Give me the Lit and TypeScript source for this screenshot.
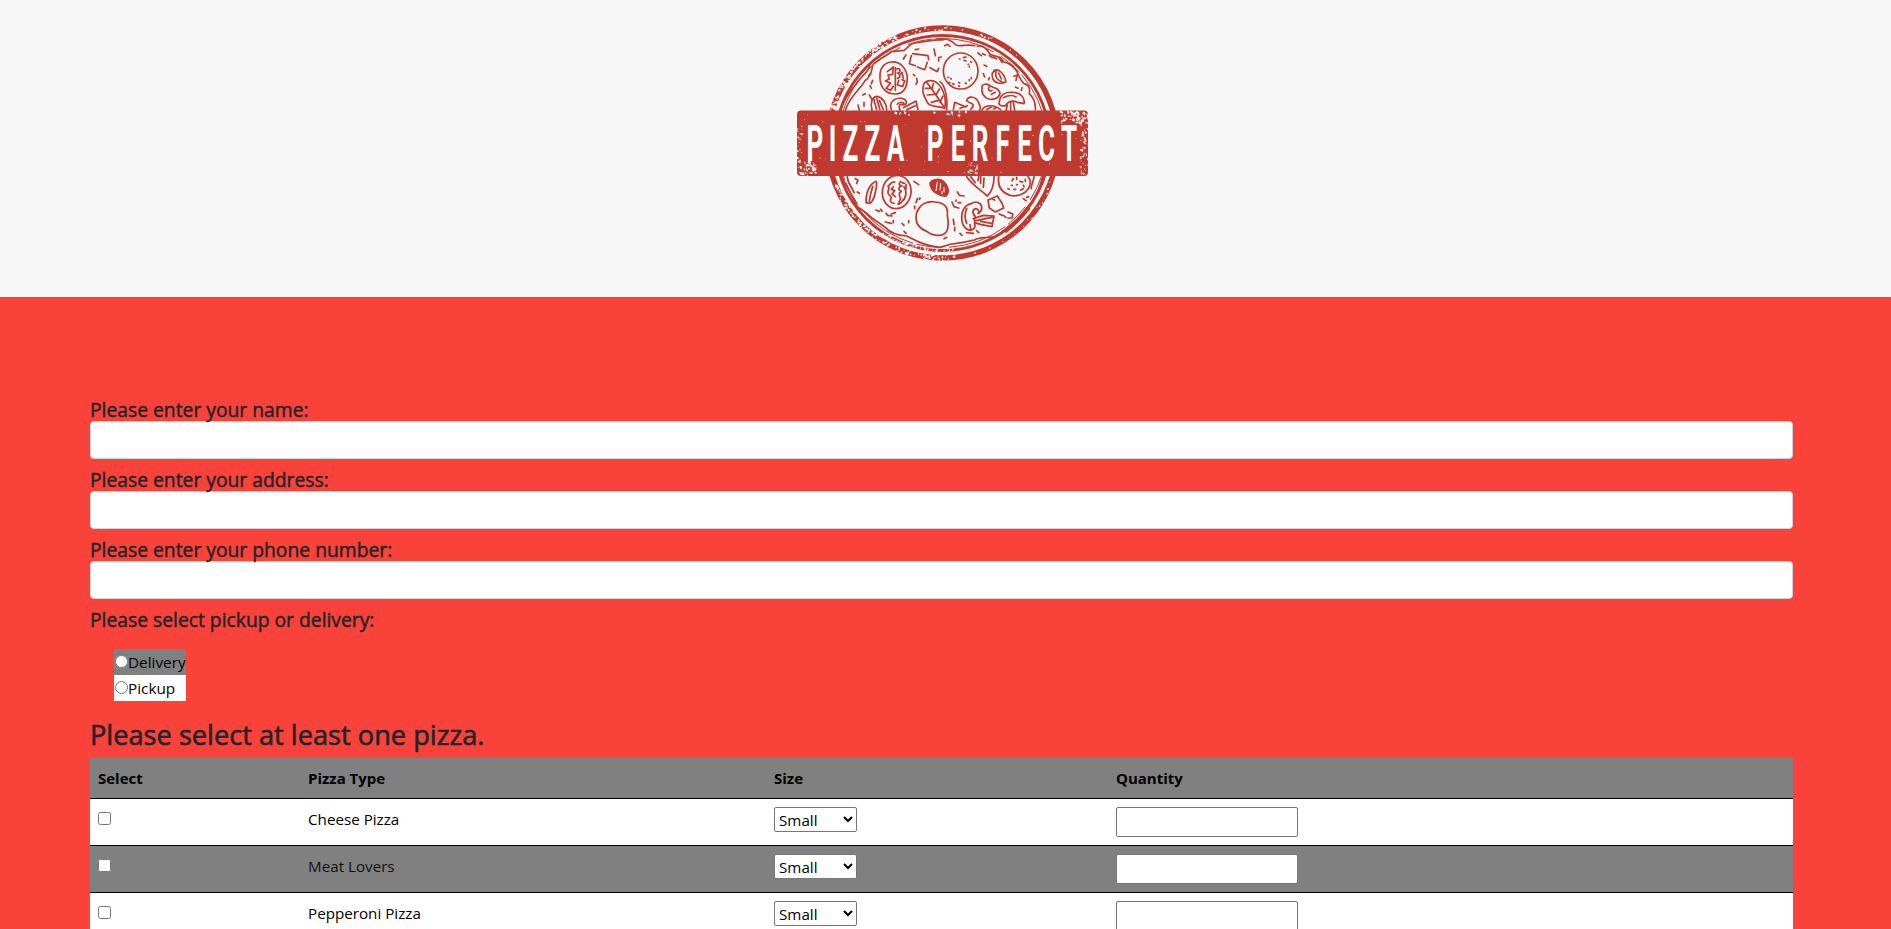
import { LitElement, html, svg, css } from "lit";
import { customElement } from "lit/decorators.js";

const LETTERS = [815, 832.7, 850.5, 872.5, 895.5, 915, 935, 958, 980, 1002.5, 1024.5, 1046.5, 1069];
const STRETCH = 0.52;

/** Deterministic generator so the worn texture is the same on each paint. */
function random(seed: number) {
  let s = seed;
  return () => (s = (s * 16807) % 2147483647) / 2147483647;
}

function specks(seed: number, n: number, x: number, y: number, w: number, h: number, max: number) {
  const r = random(seed);
  let d = "";
  for (let i = 0; i < n; i++) {
    const px = x + r() * w, py = y + r() * h, a = 0.4 + r() * max, b = 0.4 + r() * max;
    d += `M${px.toFixed(1)} ${py.toFixed(1)}l${a.toFixed(1)} ${(b / 2).toFixed(1)}l${(-a / 3).toFixed(1)} ${b.toFixed(1)}l${(-a).toFixed(1)} ${(-b / 2).toFixed(1)}z`;
  }
  return d;
}

function rimSpecks(seed: number, n: number, from: number, to: number, rad: number, spread: number, max: number) {
  const r = random(seed);
  let d = "";
  for (let i = 0; i < n; i++) {
    const t = ((from + r() * (to - from)) * Math.PI) / 180;
    const q = rad + (r() - 0.5) * spread;
    const px = 942.5 + q * Math.cos(t), py = 143 + q * Math.sin(t);
    const a = 0.6 + r() * max, b = 0.5 + r() * max;
    d += `M${px.toFixed(1)} ${py.toFixed(1)}l${a.toFixed(1)} ${(-b / 2).toFixed(1)}l${(a / 4).toFixed(1)} ${b.toFixed(1)}l${(-a).toFixed(1)} ${(b / 3).toFixed(1)}z`;
  }
  return d;
}

@customElement("pizza-logo")
export class PizzaLogo extends LitElement {
  static styles = css`
    :host { display: block; width: 310px; height: 255px; }
    .art { display: block; width: 310px; height: 255px; }
    .line { fill: none; stroke: #c0392e; stroke-linecap: round; stroke-linejoin: round; }
    .ink { fill: #c0392e; }
    .paper { fill: #f7f7f7; }
    .name { font-family: Roboto, "Liberation Sans", sans-serif; font-size: 50px; font-weight: 700; fill: #fff; text-anchor: middle; }
  `;

  private topLeft() {
    return svg`<g class="line" transform="translate(790 15) scale(.33333)" stroke-width="5">
      <path d="M152 284C160 258 178 232 198 208C206 190 232 176 240 152M166 286C180 240 216 218 224 198C240 188 246 168 248 150M252 146C270 130 294 120 304 110L342 106C356 96 360 86 374 84C400 82 416 74 462 74" />
      <path d="M270 192C268 162 278 144 304 141C332 138 350 162 352 188C352 220 338 237 318 237C292 238 272 222 270 192" />
      <path d="M292 170l18-14-2 22-14 2 4 12-12 6 16 6-14 16 14 6 8-12M316 158v68M320 162c12-6 14 12 2 12 12 2 8 16 0 16M326 196l-4 14 16 4 6-16-8-4M328 180l8-8 4 18" />
      <path d="M368 116L414 122L416 134M412 142L404 164L382 156M376 152L358 146L364 122" />
      <path d="M432 102l4 20M446 128v10M420 158l22 12 4-10M386 102l-10 2M348 120l-8 12M380 190l2 10-4 8M236 182l6-6M248 196l-4 10M240 212l4 8M226 236l-8 4M238 240l8 14M204 270l4 16M222 262l0 12M370 178l4 4" />
      <path d="M400 212C402 196 424 192 442 204C462 222 470 256 464 280C444 272 420 278 412 262C400 240 396 230 400 212M408 200C424 218 442 246 462 276M426 222l4-16M438 240l10-18M424 220l-18 0M434 238l-22 2M446 256l-22 6M450 262l8-18" />
      <path d="M246 286C240 264 246 246 260 244C278 246 290 266 290 286M252 254l8 30M260 250l10 34M268 256l12 28" />
      <path d="M304 284C296 262 312 248 334 250C352 252 354 270 340 270C330 264 324 272 330 286M340 278L378 258L384 284M350 284l26-12M322 268c6-8 18-8 20-2" />
    </g>`;
  }

  private topRight() {
    return svg`<g class="line" transform="translate(940 15) scale(.33333)" stroke-width="5">
      <path d="M0 74C18 68 34 76 48 90C62 96 82 86 104 92M112 94C128 88 142 104 150 118C166 126 182 120 190 140C206 144 222 152 232 172C238 184 240 196 252 206C268 208 270 224 268 236C280 248 288 260 286 284" />
      <ellipse cx="62" cy="168" rx="52" ry="54" />
      <path d="M58 132h2M72 136l6 2M84 148h2M88 154v2M70 128l8-2M92 140l2 2M24 186v2M32 190l2 2M26 202l4 2M38 206l4 2M56 202l3 2M76 204l3 2M94 188v3M88 194v3M56 212l2 2" />
      <path d="M162 166C176 160 192 174 198 200C184 208 164 206 158 190C154 178 156 168 168 168M168 172c-4 14 6 24 18 28M176 174l8 18" />
      <path d="M126 218C124 206 142 204 152 214C164 220 178 220 180 236C176 250 160 256 146 252C130 246 124 232 126 218M148 214c-6 10 0 18 8 12M154 238l12-6" />
      <path d="M178 260C180 240 196 230 218 232C242 232 256 250 252 266L232 262C220 256 206 258 196 272C182 274 174 270 178 260M202 270l-4 18M212 262v24M220 262l4 24M190 248c12-6 26-10 38-2" />
      <path d="M126 286C132 270 160 266 182 284M140 284l14-8M160 282l8-4M44 262L40 284M44 262L78 276M60 280l22-8M80 258C84 240 110 244 116 264C122 274 122 284 118 286M82 258C86 266 100 262 100 272L92 284M0 200C16 210 24 256 20 284" />
      <path d="M14 92l8-4 8 6M114 114l10 8M128 116l8 4M132 150l8 4M130 176l4 10M148 188l-2 6M222 184l10-4-4 16M226 216l8 4M246 218l-2 8M148 122l10 6M160 126l10 6M178 130l8 12M208 146l10 6M0 126h4" />
    </g>`;
  }

  private bottom() {
    return svg`<g class="line" transform="translate(810 172) scale(.33333)" stroke-width="5.2">
      <path d="M96 14C106 38 128 72 142 104L168 122C186 142 208 152 226 166C238 180 262 190 290 192L322 208C346 218 366 224 390 226L424 216C450 214 474 208 494 204C506 194 532 200 562 192L612 150C632 134 646 110 662 94C682 66 692 40 698 14M112 14C112 34 124 40 132 62M672 14c-2 20-10 24-8 36M588 180c24-18 50-44 70-70" />
      <ellipse cx="260" cy="60" rx="43" ry="50" transform="rotate(8 260 60)" />
      <path d="M254 30c-12-2-14 10-20 12 8 6-2 12 0 20 0 8 10 8 10 16-6 8-2 16 8 16M250 44l-6 8 10 4-8 10 10 8M272 28c-8 8-4 14 4 14-12 2-12 12-2 16-10 6-6 14-2 22-4 8-8 10-4 16M282 44c10 14 6 36-6 44M264 96l10-4M288 38v12M276 32l8 2" />
      <path d="M198 28C182 36 168 56 168 92L180 94C192 88 200 50 200 32zM188 44c-4 14-8 24-10 44" />
      <path class="ink" d="M360 34C366 20 390 18 404 32C416 44 418 62 408 72C388 74 362 58 360 34z" />
      <path stroke="#f7f7f7" stroke-width="3" d="M382 30l-4 26M392 34l-2 20M402 46v14M396 58v8" />
      <path d="M320 122C330 96 352 86 376 90C404 92 415 106 412 130C418 158 414 180 402 186C388 194 364 190 350 178C324 168 314 148 320 122z" />
      <path d="M470 14C486 38 510 52 532 72C546 58 552 36 552 14M512 14v20M506 14l-2 12M522 18l-2 28M482 14l14 18" />
      <path d="M566 14C562 44 576 62 600 70C630 76 654 60 660 38C662 28 658 18 654 14M606 26l4-6M620 38h2M630 28l8 2M640 40l2 4M604 40h3M612 52h5M594 50l4 2M632 54l8-4M620 16v6M646 22v6" />
      <path d="M486 94C462 98 452 120 456 148C462 176 486 180 494 166C498 156 488 146 496 134C484 122 488 110 500 110C508 114 508 122 504 124C518 118 518 100 508 94C502 88 492 90 486 94M490 140L520 130L552 132L546 164L514 158L494 152M498 146l48-10M512 148l34 6M470 110c-6 14-6 30 0 44M480 158l2 12" />
      <path d="M534 84L562 72L576 94L581 108L556 120L538 108L534 84M546 80l8 4" />
      <path d="M136 20l8 4-4 10M142 60l6 4M198 114l10 4M212 112l4 6M228 124l4 6 14 2M244 126l12-4M226 150l18 4M250 146v6M276 154l6 6M296 146v6M282 178l6 6M322 80l-4 12M330 78l-2 4M314 102v8M312 28l14 10M442 60l6 10 14 2M426 90l6 14 14 4M444 92h8M438 84v4M430 142l2 16M434 166v10M450 184l6 6M470 182l20 2M500 176l6 6M568 126l8 4M580 130l8 6M594 138l12 0 2-10M594 120l14 6M640 80l8 6M650 76l6-2M402 200l8-4" />
    </g>`;
  }

  render() {
    return html`<svg class="art" viewBox="790 15 310 255" role="img" aria-label="Pizza Perfect">
      <circle class="line" cx="942.5" cy="143" r="115" stroke-width="5.4" />
      <circle class="line" cx="942.5" cy="143" r="107.5" stroke-width="2.8" />
      <circle class="line" cx="942.5" cy="143" r="104.5" stroke-width="1" stroke-dasharray="60 9 24 4" />
      <path class="paper" d="${rimSpecks(17, 150, 186, 246, 116.5, 6, 2.2)}" />
      <path class="paper" d="${rimSpecks(31, 130, 84, 160, 115, 6, 2)}" />
      <path class="paper" d="${rimSpecks(47, 60, 85, 125, 108, 4, 1.8)}" />
      <path class="paper" d="${rimSpecks(5, 28, 246, 310, 115, 5, 1.5)}" />
      <path class="paper" d="${rimSpecks(8, 20, 20, 80, 116, 5, 1.3)}" />
      ${this.topLeft()} ${this.topRight()} ${this.bottom()}
      <rect class="ink" x="797" y="110.5" width="291" height="65.5" rx="4" />
      <path class="paper" d="${specks(11, 36, 798, 160, 17, 15, 2.6)}" />
      <path class="paper" d="${specks(23, 60, 1060, 110, 28, 12, 2.2)}" />
      <path class="paper" d="${specks(29, 40, 1080, 122, 8, 54, 1.9)}" />
      <path class="paper" d="${specks(37, 18, 797, 122, 6, 40, 1.5)}" />
      <path class="paper" d="${specks(41, 14, 895, 110, 75, 4, 2)}" />
      <path class="paper" d="${specks(43, 14, 968, 162, 10, 13, 2.2)}" />
      <path class="paper" d="${specks(59, 40, 800, 112, 285, 62, 0.7)}" />
      <text class="name" transform="scale(${STRETCH} 1)" y="161.3" x="${LETTERS.map((x) => (x / STRETCH).toFixed(1)).join(" ")}">PIZZA PERFECT</text>
    </svg>`;
  }
}

@customElement("app-root")
export class AppRoot extends LitElement {
  static styles = css`
    :host {
      display: block; height: 929px; overflow: hidden; background: #f9423a; color: #212529;
      font: 400 16px/24px "Open Sans", "Noto Sans", sans-serif;
    }
    * { box-sizing: border-box; }
    .banner { height: 297px; padding: 15px 1px 0 0; background: #f7f7f7; display: flex; justify-content: center; }
    .order { padding: 100px 98px 0 90px; }
    .label { display: block; margin: 0; height: 24px; font-size: 19.3px; line-height: 26px; font-weight: 400; -webkit-text-stroke: 0.45px #212529; white-space: nowrap; }
    .field { display: block; width: 100%; height: 38px; margin: 0 0 8px; border: 1px solid #ced4da; border-radius: 4px; background: #fff; outline: 0; }
    .modes { display: flex; flex-direction: column; align-items: flex-start; margin: 18px 0 0 24px; color: #000; }
    .mode { display: flex; height: 26px; width: 72px; padding: 1px; font-size: 15.3px; background: #fff; white-space: nowrap; }
    .mode.alt { background: gray; }
    .mode input { width: 13px; height: 13px; margin: 5px 0 0; }
    .title { margin: 15px 0 8px; height: 34px; font-size: 27.2px; line-height: 37px; font-weight: 400; -webkit-text-stroke: 0.6px #212529; white-space: nowrap; }
    .grid { display: grid; }
    .row { display: grid; grid-template-columns: 210px 466px 342px 1fr; height: 47px; border-bottom: 1px solid #000; background: #fff; color: #000; font-size: 15.2px; }
    .row.alt { background: gray; color: #111; }
    .row.head { height: 41px; color: #000; font-weight: 700; font-size: 15px; }
    .cell { padding: 8px; }
    .cell input[type="checkbox"] { display: block; width: 13px; height: 13px; margin: 5px 0 0; }
    .size { display: block; width: 83px; height: 25px; margin: 0; font: inherit; border: 1px solid #767676; border-radius: 2px; background: #fff; color: #000; padding: 0; }
    .qty { display: block; width: 182px; height: 30px; margin: 0; border: 1px solid #767676; border-radius: 2px; background: #fff; }
  `;

  private row(name: string, alt: boolean) {
    return html`<div class="row ${alt ? "alt" : ""}">
      <div class="cell"><input type="checkbox" aria-label=${name} /></div>
      <div class="cell">${name}</div>
      <div class="cell"><select class="size"><option>Small</option><option>Medium</option><option>Large</option></select></div>
      <div class="cell"><input class="qty" type="number" /></div>
    </div>`;
  }

  render() {
    return html`
      <header class="banner"><pizza-logo></pizza-logo></header>
      <main class="order">
        ${["name", "address", "phone number"].map(
          (f) => html`<h5 class="label">Please enter your ${f}:</h5><input class="field" type="text" />`
        )}
        <h5 class="label">Please select pickup or delivery:</h5>
        <div class="modes">
          <label class="mode alt"><input type="radio" name="mode" />Delivery</label>
          <label class="mode"><input type="radio" name="mode" />Pickup</label>
        </div>
        <h3 class="title">Please select at least one pizza.</h3>
        <div class="grid">
          <div class="row head alt">
            <div class="cell">Select</div><div class="cell">Pizza Type</div><div class="cell">Size</div><div class="cell">Quantity</div>
          </div>
          ${["Cheese Pizza", "Meat Lovers", "Pepperoni Pizza"].map((n, i) => this.row(n, i % 2 === 1))}
        </div>
      </main>
    `;
  }
}
